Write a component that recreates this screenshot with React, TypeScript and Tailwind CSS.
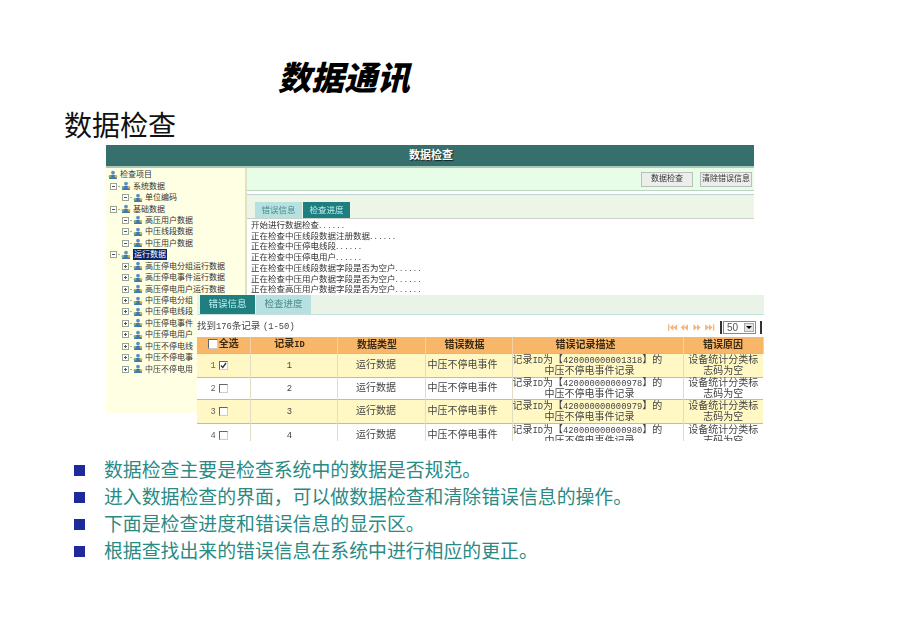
const CJK = "font-['Liberation_Sans','Noto_Sans_CJK_SC',sans-serif]";
const LATIN = "font-['Liberation_Mono','Noto_Sans_CJK_SC',monospace] text-[8.800px]";

const TREE = [
  { label: "检查项目", depth: 0, mark: "" },
  { label: "系统数据", depth: 1, mark: "-" },
  { label: "单位编码", depth: 2, mark: "-" },
  { label: "基础数据", depth: 1, mark: "-" },
  { label: "高压用户数据", depth: 2, mark: "-" },
  { label: "中压线段数据", depth: 2, mark: "-" },
  { label: "中压用户数据", depth: 2, mark: "-" },
  { label: "运行数据", depth: 1, mark: "-", active: true },
  { label: "高压停电分组运行数据", depth: 2, mark: "+" },
  { label: "高压停电事件运行数据", depth: 2, mark: "+" },
  { label: "高压停电用户运行数据", depth: 2, mark: "+" },
  { label: "中压停电分组", depth: 2, mark: "+" },
  { label: "中压停电线段", depth: 2, mark: "+" },
  { label: "中压停电事件", depth: 2, mark: "+" },
  { label: "中压停电用户", depth: 2, mark: "+" },
  { label: "中压不停电线", depth: 2, mark: "+" },
  { label: "中压不停电事", depth: 2, mark: "+" },
  { label: "中压不停电用", depth: 2, mark: "+" },
];

const LOG = [
  "开始进行数据检查",
  "正在检查中压线段数据注册数据",
  "正在检查中压停电线段",
  "正在检查中压停电用户",
  "正在检查中压线段数据字段是否为空户",
  "正在检查中压用户数据字段是否为空户",
  "正在检查高压用户数据字段是否为空户",
];

const ROWS = [
  { n: 1, code: "420000000001318", checked: true, h: "h-[24px]", bg: "bg-[#fff8c4]" },
  { n: 2, code: "420000000000978", checked: false, h: "h-[22px]", bg: "bg-white" },
  { n: 3, code: "420000000000979", checked: false, h: "h-[24px]", bg: "bg-[#fff8c4]" },
  { n: 4, code: "420000000000980", checked: false, h: "h-[24px]", bg: "bg-white" },
];

const BULLETS = [
  "数据检查主要是检查系统中的数据是否规范。",
  "进入数据检查的界面，可以做数据检查和清除错误信息的操作。",
  "下面是检查进度和错误信息的显示区。",
  "根据查找出来的错误信息在系统中进行相应的更正。",
];

function TreeIcon() {
  return (
    <svg width="10" height="10" viewBox="0 0 10 10" className="shrink-0">
      <circle cx="5" cy="2.6" r="1.9" fill="#5b8fc4" />
      <path d="M1 9c0-3 1.6-4.2 4-4.2S9 6 9 9z" fill="#3f78b0" />
      <circle cx="2" cy="6.2" r="1.3" fill="#7fb069" />
      <circle cx="8" cy="6.2" r="1.3" fill="#d9b44a" />
    </svg>
  );
}

function Expander({ mark }: { mark: string }) {
  return (
    <span className="relative flex h-[7px] w-[7px] shrink-0 items-center justify-center border border-[#9aa59a] bg-white">
      <span className="h-px w-[3px] bg-[#555]" />
      {mark === "+" && <span className="absolute h-[3px] w-px bg-[#555]" />}
    </span>
  );
}

function TreeRow({ label, depth, mark, active }: { label: string; depth: number; mark: string; active?: boolean }) {
  const indent = depth === 0 ? "pl-[2px]" : depth === 1 ? "pl-[4px]" : "pl-[16px]";
  return (
    <div className={`flex h-[11.45px] items-center gap-[1px] whitespace-nowrap ${indent}`}>
      {mark && <Expander mark={mark} />}
      {mark && <span className="h-px w-[2px] bg-[#a9b0a0]" />}
      <TreeIcon />
      <span className={`ml-[1px] text-[8px] leading-[11px] ${active ? "bg-[#0a246a] px-px text-white" : "text-[#333]"}`}>
        {label}
      </span>
    </div>
  );
}

function TopButton({ label, className }: { label: string; className: string }) {
  return (
    <div className={`flex h-[15px] items-center justify-center whitespace-nowrap border border-[#b9c0bb] bg-[#eceeec] text-[8px] text-[#333] ${className}`}>
      {label}
    </div>
  );
}

function Check({ on, big }: { on: boolean; big?: boolean }) {
  return (
    <span className={`relative inline-flex items-center justify-center border border-t-[#666] border-l-[#666] border-r-[#ccc] border-b-[#ccc] bg-white ${big ? "h-[10px] w-[10px]" : "h-[9px] w-[9px]"}`}>
      {on && (
        <svg width="7" height="7" viewBox="0 0 7 7">
          <path d="M1 3.5l1.8 2L6 1" fill="none" stroke="#333" strokeWidth="1.3" />
        </svg>
      )}
    </span>
  );
}

function Pager() {
  return (
    <div className="flex items-center">
      <svg width="49" height="9" viewBox="0 0 54 9" fill="#f5b47a">
        <rect x="0" y="1" width="1.5" height="7" />
        <path d="M6 1v7L2 4.5zM10 1v7L6 4.5z" />
        <path d="M18 1v7l-4-3.500zM22 1v7l-4-3.500z" />
        <path d="M28 1v7l4-3.500zM32 1v7l4-3.500z" />
        <path d="M41 1v7l4-3.500zM45 1v7l4-3.500z" />
        <rect x="49.500" y="1" width="1.500" height="7" />
      </svg>
      <span className="ml-[3px] h-[13px] w-[2px] bg-[#333]" />
      <div className="ml-px flex h-[13px] w-[33px] items-center justify-between border border-[#888] bg-white pl-[3px] pr-px text-[10px] text-[#555]">
        50
        <span className="flex h-[9px] w-[10px] items-center justify-center border border-[#aaa] bg-[#e4e4e4]">
          <span className="border-x-[3px] border-t-[3px] border-x-transparent border-t-black" />
        </span>
      </div>
      <span className="ml-[4px] h-[13px] w-[2px] bg-[#333]" />
    </div>
  );
}

function ErrorTable() {
  const cell = "border-r border-[#e3dcc4] text-center align-middle";
  const head = "border-r border-[#f6d0a4] text-center text-[10px] leading-[12px] font-bold text-[#3b2a12]";
  return (
    <table className="w-[566px] table-fixed border-collapse text-[10px] leading-[12px] text-[#444]">
      <colgroup>
        <col className="w-[53px]" />
        <col className="w-[87px]" />
        <col className="w-[88px]" />
        <col className="w-[87px]" />
        <col className="w-[171px]" />
        <col className="w-[80px]" />
      </colgroup>
      <thead>
        <tr className="h-[16px] bg-[#f8b668]">
          <th className={head}>
            <span className="inline-flex items-center gap-[1px]">
              <Check on={false} big /> 全选
            </span>
          </th>
          <th className={`${head} pr-[8px]`}>
            记录<span className={LATIN}>ID</span>
          </th>
          <th className={`${head} pr-[8px]`}>数据类型</th>
          <th className={`${head} pr-[8px]`}>错误数据</th>
          <th className={`${head} pr-[24px]`}>错误记录描述</th>
          <th className={head}>错误原因</th>
        </tr>
      </thead>
      <tbody>
        {ROWS.map((r) => (
          <tr key={r.n} className={`${r.h} ${r.bg} border-t border-[#c9bd8e]`}>
            <td className={`${cell} pr-[8px]`}>
              <span className="inline-flex items-center gap-[3px] text-[#666]">
                <span className={LATIN}>{r.n}</span> <Check on={r.checked} />
              </span>
            </td>
            <td className={`${cell} pr-[8px]`}>
              <span className={LATIN}>{r.n}</span>
            </td>
            <td className={`${cell} pr-[10px]`}>运行数据</td>
            <td className={`${cell} pr-[12px]`}>中压不停电事件</td>
            <td className={cell}>
              <div className="flex h-[20px] flex-col justify-center">
                <div className="h-[11.500px] shrink-0 text-left leading-[11.500px] whitespace-nowrap">
                  记录<span className={LATIN}>ID</span>为【<span className={LATIN}>{r.code}</span>】的
                </div>
                <div className="h-[11.500px] shrink-0 pr-[16px] leading-[11.500px]">中压不停电事件记录</div>
              </div>
            </td>
            <td className="text-center align-middle">
              <div className="flex h-[20px] flex-col justify-center">
                <div className="h-[11.500px] shrink-0 leading-[11.500px]">设备统计分类标</div>
                <div className="h-[11.500px] shrink-0 leading-[11.500px]">志码为空</div>
              </div>
            </td>
          </tr>
        ))}
      </tbody>
    </table>
  );
}

export default function App() {
  return (
    <div className={`h-[637px] w-[920px] overflow-hidden bg-white ${CJK}`}>
      <h1 className="pl-[278px] pt-[60px] text-[33px] leading-[38px] font-black text-black italic">数据通讯</h1>
      <h2 className="pl-[64px] pt-[12px] text-[28px] leading-[34px] text-[#111]">数据检查</h2>

      <div className="relative ml-[106px] mt-[1px] h-[268px] w-[648px] blur-[0.3px]">
        <div className="flex h-[23px] items-center justify-center border-b-2 border-[#a9cbb8] bg-[#36706c] pl-[2px] text-[11px] font-bold text-white [text-shadow:1px_1px_1px_#0a2222]">
          数据检查
        </div>
        <div className="flex h-[245px]">
          <div className="w-[141px] border-r-2 border-[#dfe3c2] bg-[#ffffe4] pt-[1px]">
            {TREE.map((t) => (
              <TreeRow key={t.label} {...t} />
            ))}
          </div>
          <div className="flex-1">
            <div className="flex h-[23px] items-center justify-end gap-[7px] border-b border-[#bfd2c4] bg-[#e8fde8] pr-[2px]">
              <TopButton label="数据检查" className="w-[52px]" />
              <TopButton label="清除错误信息" className="w-[52px]" />
            </div>
            <div className="mt-[3px] flex h-[25px] items-end border-t border-b border-t-[#bcd3cf] border-b-[#c9d2c6] bg-[#edf5e6] pl-[8px]">
              <div className="flex h-[16px] w-[47px] items-center justify-center bg-[#b7e0e0] text-[8.500px] text-[#4b8a8a]">错误信息</div>
              <div className="ml-px flex h-[16px] w-[47px] items-center justify-center bg-[#1f7f80] text-[8.500px] text-[#bfeeee]">检查进度</div>
            </div>
            <div className="pl-[4px] pt-[1px] text-[8.500px] leading-[10.700px] whitespace-nowrap text-[#333]">
              {LOG.map((l) => (
                <div key={l}>
                  {l}
                  <span className="tracking-[2.200px]">......</span>
                </div>
              ))}
            </div>
          </div>
        </div>

        <div className="absolute left-[91px] top-[150px] h-[146px] w-[567px] overflow-hidden bg-white">
          <div className="flex h-[20px] items-end border-b border-[#c4e0d8] bg-[#e9f3e8] pl-[3px]">
            <div className="flex h-[19px] w-[55px] items-center justify-center bg-[#1f7f80] text-[9.500px] text-[#c4f0f0]">错误信息</div>
            <div className="ml-px flex h-[19px] w-[55px] items-center justify-center bg-[#b7e0e0] text-[9.500px] text-[#4b8a8a]">检查进度</div>
          </div>
          <div className="flex h-[22px] items-center justify-between pr-[2px] pt-[2px] text-[9.500px] text-[#444]">
            <span>
              找到<span className={LATIN}>176</span>条记录 <span className={LATIN}>(1-50)</span>
            </span>
            <Pager />
          </div>
          <ErrorTable />
        </div>
      </div>

      <ul className="ml-[74px] mt-[44px]">
        {BULLETS.map((b) => (
          <li key={b} className="flex h-[27px] items-center gap-[19px] whitespace-nowrap text-[18.880px] leading-[27px] text-[#2a8a84]">
            <span className="h-[11px] w-[11px] shrink-0 bg-[#1e2a9c]" />
            {b}
          </li>
        ))}
      </ul>
    </div>
  );
}
